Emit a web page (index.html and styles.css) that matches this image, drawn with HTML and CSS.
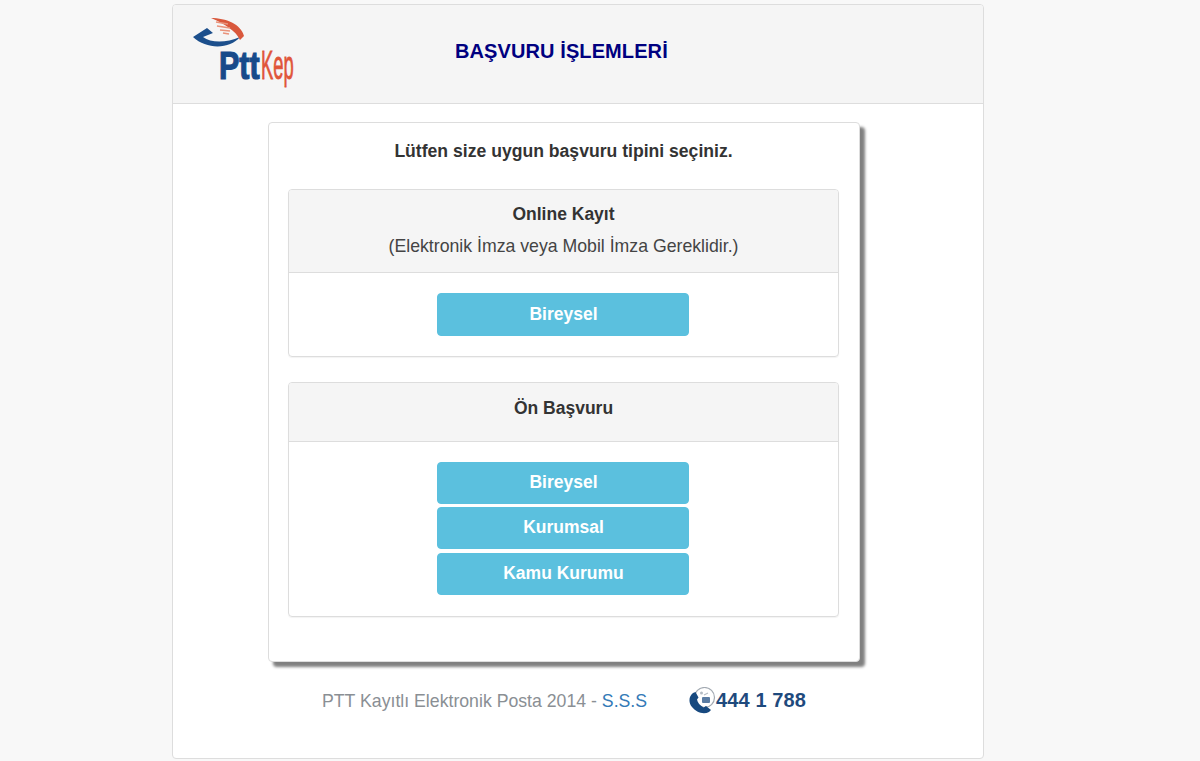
FILE: index.html
```html
<!DOCTYPE html>
<html lang="tr">
<head>
<meta charset="utf-8">
<title>PTT KEP Başvuru İşlemleri</title>
<link rel="stylesheet" href="styles.css">
</head>
<body>
<div class="outer">
  <header class="top">
    <svg class="logo" width="110" height="76" viewBox="0 0 110 76" aria-label="PttKep">
      <path d="M1 19 L15 10 L21 15 L11 19 C19 25 34 25 48 19 C38 31 15 32 1 19 Z" fill="#1c4f8c"/>
      <path d="M19 0 C34 0 49 6 52 18 L48 22 C44 13 33 6 19 0 Z" fill="#d9583c"/>
      <path d="M24 4 L36 6 M25 8 L38 10 M28 12 L38 13 M31 15 L37 16" stroke="#e9937b" stroke-width="1.7" fill="none"/>
      <text class="logo-ptt" transform="translate(27 61) scale(.8 1)">Ptt</text>
      <text class="logo-kep" transform="translate(69 61) scale(.46 1)">Kep</text>
    </svg>
    <h1 class="title">BAŞVURU İŞLEMLERİ</h1>
  </header>
  <main class="body">
    <section class="card">
      <p class="lead">Lütfen size uygun başvuru tipini seçiniz.</p>
      <div class="panel">
        <div class="panel-head panel-head-tall">
          <div class="panel-title">Online Kayıt</div>
          <div class="panel-sub">(Elektronik İmza veya Mobil İmza Gereklidir.)</div>
        </div>
        <div class="panel-body">
          <a class="btn btn-tall">Bireysel</a>
        </div>
      </div>
      <div class="panel">
        <div class="panel-head">
          <div class="panel-title">Ön Başvuru</div>
        </div>
        <div class="panel-body panel-body-multi">
          <a class="btn">Bireysel</a>
          <a class="btn">Kurumsal</a>
          <a class="btn">Kamu Kurumu</a>
        </div>
      </div>
    </section>
    <footer class="foot">
      <span class="foot-text">PTT Kayıtlı Elektronik Posta 2014 - <a class="foot-link">S.S.S</a></span>
      <span class="phone">
        <svg class="phone-icon" width="27" height="27" viewBox="0 0 27 27" aria-hidden="true">
          <circle cx="15.5" cy="10.5" r="10" fill="none" stroke="#a3aab2" stroke-width="1.2"/>
          <path d="M4 6 C0 9 -1 15 3 20 C7 25 14 28 20 25 L22 23 L17 19 L14.5 20.5 C11 18.5 8.5 15.5 8 12.5 L9.5 10.5 L6.5 5 Z" fill="#17497f"/>
          <rect x="13" y="10" width="8" height="6" rx="1" fill="#5a7ca3"/>
          <circle cx="12.5" cy="6" r="1.5" fill="#b5bcc4"/>
          <path d="M15 8 L19 6" stroke="#b5bcc4" stroke-width="1.2"/>
        </svg>
        <span class="phone-num">444 1 788</span>
      </span>
    </footer>
  </main>
</div>
</body>
</html>
```

FILE: styles.css
```css
* { box-sizing: border-box; }
html, body { height: 100%; }
body {
  margin: 0;
  background: #f8f8f8;
  font-family: "Liberation Sans", Arial, sans-serif;
  color: #333;
  overflow: hidden;
}
.outer {
  width: 812px;
  height: 755px;
  margin: 4px 0 0 172px;
  background: #fff;
  border: 1px solid #ddd;
  border-radius: 4px;
  display: flex;
  flex-direction: column;
}
.top {
  height: 99px;
  flex: none;
  background: #f5f5f5;
  border-bottom: 1px solid #ddd;
  border-radius: 3px 3px 0 0;
  display: flex;
  align-items: flex-start;
  padding: 13px 0 0 19px;
}
.logo { flex: none; display: block; }
.logo-ptt {
  font-family: "Liberation Sans", Arial, sans-serif;
  font-weight: 700;
  font-size: 38px;
  fill: #174a8a;
  stroke: #174a8a;
  stroke-width: 1.2px;
}
.logo-kep {
  font-family: "Liberation Sans", Arial, sans-serif;
  font-size: 40px;
  fill: #e0553a;
  stroke: #e0553a;
  stroke-width: .8px;
}
.title {
  margin: 21px 0 0 153px;
  font-size: 20px;
  line-height: 24px;
  font-weight: 700;
  letter-spacing: .1px;
  color: #000080;
  white-space: nowrap;
}
.body {
  flex: 1;
  padding: 18px 0 0 95px;
}
.card {
  width: 592px;
  height: 540px;
  background: #fff;
  border: 1px solid #ddd;
  border-radius: 4px;
  box-shadow: 5px 5px 3px #808080;
  padding: 0 20px 0 19px;
}
.lead {
  margin: 17px 0 27px;
  font-size: 17.6px;
  line-height: 22px;
  font-weight: 700;
  text-align: center;
  color: #333;
}
.panel {
  border: 1px solid #ddd;
  border-radius: 4px;
  margin-bottom: 25px;
  box-shadow: 0 1px 1px rgba(0,0,0,.05);
}
.panel-head {
  height: 59px;
  background: #f5f5f5;
  border-bottom: 1px solid #ddd;
  border-radius: 3px 3px 0 0;
  text-align: center;
  padding-top: 15px;
}
.panel-head-tall { height: 83px; padding-top: 14px; }
.panel-title {
  font-size: 17.5px;
  line-height: 20px;
  font-weight: 700;
  color: #333;
}
.panel-sub {
  margin-top: 12px;
  font-size: 17.7px;
  line-height: 20px;
  color: #444;
}
.panel-body {
  padding: 20px 1px 20px 0;
  display: flex;
  flex-direction: column;
  align-items: center;
  gap: 3.4px;
}
.panel-body-multi { padding-bottom: 21px; }
.btn {
  width: 252px;
  height: 42px;
  padding-left: 1px;
  background: #5bc0de;
  border: 1px solid #5ac0de;
  border-radius: 4px;
  color: #fff;
  font-size: 17.5px;
  font-weight: 700;
  line-height: 38px;
  text-align: center;
}
.btn-tall { height: 43px; line-height: 40px; }
.foot {
  display: flex;
  align-items: center;
  height: 40px;
  margin-top: 19px;
  padding-left: 54px;
}
.foot-text {
  font-size: 17.7px;
  color: #8a8f94;
  white-space: nowrap;
}
.foot-link { color: #337ab7; }
.phone {
  display: flex;
  align-items: center;
  margin: -2px 0 0 42px;
}
.phone-icon { flex: none; display: block; }
.phone-num {
  font-size: 20px;
  font-weight: 700;
  letter-spacing: .1px;
  color: #1f4a7d;
  white-space: nowrap;
}
```
